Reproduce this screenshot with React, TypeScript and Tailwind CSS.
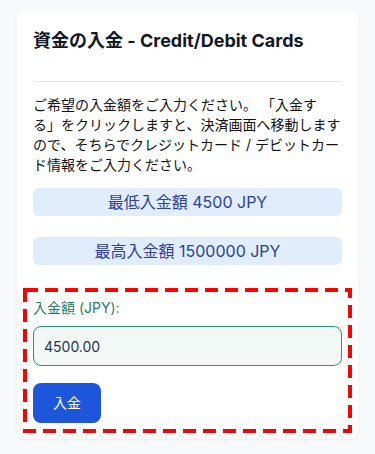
export default function App() {
  return (
    <div
      className="min-h-[454px] bg-[#f8f9fb] pt-[11px] px-[17px] pb-4"
      style={{ fontFamily: 'Inter, "Noto Sans CJK JP", sans-serif' }}
    >
      <div className="rounded-lg bg-white px-4 pt-4 pb-4 shadow-[0_1px_3px_rgba(0,0,0,0.06)]">
        <h2 className="text-lg leading-7 font-bold text-[#111827]">
          資金の入金 - Credit/Debit Cards
        </h2>
        <hr className="mt-[26px] border-t border-[#e5e7eb]" />
        <p className="mt-[13px] text-sm leading-5 text-[#111111] [text-spacing-trim:space-all]">
          ご希望の入金額をご入力ください。 「入金する」をクリックしますと、決済画面へ移動しますので、そちらでクレジットカード / デビットカード情報をご入力ください。
        </p>

        <div className="mt-[13px] flex flex-col gap-[21px]">
          <div className="rounded-md bg-[#e0edfd] py-0.5 text-center text-base leading-6 text-[#2f3d9c]">
            最低入金額 4500 JPY
          </div>
          <div className="rounded-md bg-[#e0edfd] py-0.5 text-center text-base leading-6 text-[#2f3d9c]">
            最高入金額 1500000 JPY
          </div>
        </div>

        <form
          className="relative -mx-[10px] -mb-[10px] mt-[23px] p-[10px]"
          onSubmit={(e) => e.preventDefault()}
        >
          {/* dashed highlight frame */}
          <svg className="pointer-events-none absolute inset-0 h-full w-full">
            <rect
              x="2"
              y="2"
              className="h-[calc(100%-4px)] w-[calc(100%-4px)]"
              fill="none"
              stroke="#ff0000"
              strokeWidth="4"
              strokeDasharray="13 7"
            />
          </svg>
          <label className="mb-2 block text-sm leading-5 text-[#1f7a68]">
            入金額 (JPY):
          </label>
          <input
            type="text"
            defaultValue="4500.00"
            className="block h-10 w-full rounded-lg border border-[#1e9e70] bg-[#f2f8f5] px-[10px] text-sm text-[#1e3550] outline-none"
          />
          <button
            type="submit"
            className="mt-[17px] h-10 rounded-lg bg-[#1d56db] px-5 text-sm text-white"
          >
            入金
          </button>
        </form>
      </div>
    </div>
  );
}
